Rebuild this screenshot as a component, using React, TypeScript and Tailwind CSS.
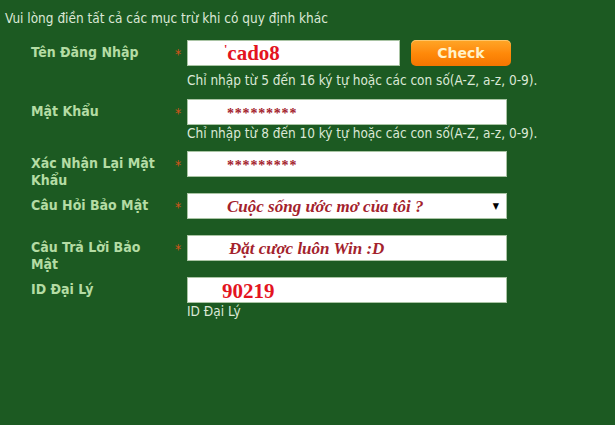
import React from "react";

const sans = { fontFamily: '"DejaVu Sans Condensed", "DejaVu Sans", Tahoma, sans-serif' };
const serif = { fontFamily: '"Liberation Serif", "DejaVu Serif", serif' };

function Label({ children }: { children: React.ReactNode }) {
  return (
    <div className="w-[144px] pt-[4px] text-[14px] font-bold leading-[17px] text-[#b4dca4]">
      {children}
    </div>
  );
}

function Star() {
  return (
    <div className="w-[12px] pt-[6px] text-[14px] leading-[17px] text-[#d2541a]">*</div>
  );
}

function Box({ w, children, className = "" }: { w: string; children?: React.ReactNode; className?: string }) {
  return (
    <div
      className={`${w} h-[26px] border border-[#a9c4a4] bg-white flex items-center ${className}`}
    >
      {children}
    </div>
  );
}

function Stars() {
  return (
    <span className="ml-[39px] text-[#a3222c] text-[14px] font-bold tracking-[0.8px] leading-none pt-[3px]" style={serif}>
      *********
    </span>
  );
}

export default function App() {
  return (
    <div className="w-[615px] h-[425px] bg-[#1c5a22] text-[13.5px]" style={sans}>
      <div className="pl-[5px] pt-[10px] leading-[16px] text-[#dbe8d6]">
        Vui lòng điền tất cả các mục trừ khi có quy định khác
      </div>

      <div className="mt-[14px] pl-[31px] flex flex-col">
        {/* Row 1 */}
        <div className="flex mb-[11px]">
          <Label>Tên Đăng Nhập</Label>
          <Star />
          <div className="flex flex-col">
            <div className="flex items-start">
              <Box w="w-[213px]">
                <span className="ml-[36px] text-[#e3141f] text-[21px] font-bold leading-none" style={serif}>
                  <span className="text-[12px] align-top">'</span>cado8
                </span>
              </Box>
              <button
                className="ml-[11px] w-[100px] h-[26px] rounded-[5px] bg-gradient-to-b from-[#ffa626] via-[#ff8a0a] to-[#f57500] text-[#fff2c8] text-[14px] font-bold leading-none shadow-[inset_0_1px_0_rgba(255,220,150,0.6)]"
                style={{ fontFamily: '"DejaVu Sans", Verdana, sans-serif' }}
              >
                Check
              </button>
            </div>
            <div className="mt-[6px] leading-[16px] text-[#dbe8d6]">
              Chỉ nhập từ 5 đến 16 ký tự hoặc các con số(A-Z, a-z, 0-9).
            </div>
          </div>
        </div>

        {/* Row 2 */}
        <div className="flex mb-[10px]">
          <Label>Mật Khẩu</Label>
          <Star />
          <div className="flex flex-col">
            <Box w="w-[320px]">
              <Stars />
            </Box>
            <div className="leading-[16px] text-[#dbe8d6]">
              Chỉ nhập từ 8 đến 10 ký tự hoặc các con số(A-Z, a-z, 0-9).
            </div>
          </div>
        </div>

        {/* Row 3 */}
        <div className="flex h-[42px]">
          <Label>
            Xác Nhận Lại Mật
            <br />
            Khẩu
          </Label>
          <Star />
          <Box w="w-[320px]">
            <Stars />
          </Box>
        </div>

        {/* Row 4 */}
        <div className="flex h-[42px]">
          <Label>Câu Hỏi Bảo Mật</Label>
          <Star />
          <Box w="w-[320px]" className="justify-between">
            <span className="ml-[39px] text-[#a3222c] text-[17px] font-bold italic leading-none" style={serif}>
              Cuộc sống ước mơ của tôi ?
            </span>
            <span className="mr-[7px] text-[9px] text-black leading-none">▼</span>
          </Box>
        </div>

        {/* Row 5 */}
        <div className="flex h-[42px]">
          <Label>
            Câu Trả Lời Bảo
            <br />
            Mật
          </Label>
          <Star />
          <Box w="w-[320px]">
            <span className="ml-[41px] text-[#a3222c] text-[17px] font-bold italic leading-none" style={serif}>
              Đặt cược luôn Win :D
            </span>
          </Box>
        </div>

        {/* Row 6 */}
        <div className="flex">
          <Label>ID Đại Lý</Label>
          <div className="w-[12px]" />
          <div className="flex flex-col">
            <Box w="w-[320px]">
              <span className="ml-[34px] pt-[2px] text-[#e3141f] text-[21px] font-bold leading-none" style={serif}>
                90219
              </span>
            </Box>
            <div className="leading-[16px] text-[#dbe8d6]">ID Đại Lý</div>
          </div>
        </div>
      </div>
    </div>
  );
}
